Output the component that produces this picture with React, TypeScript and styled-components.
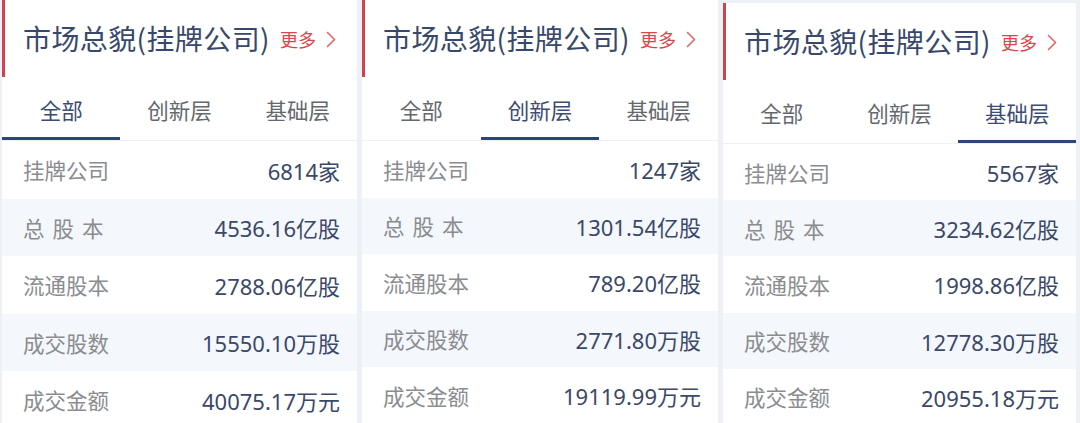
import React from "react";
import styled, { createGlobalStyle } from "styled-components";

const GlobalStyle = createGlobalStyle`
  html, body { margin: 0; padding: 0; }
  body {
    background: #edf1f6;
    font-family: "Noto Sans", "Noto Sans CJK SC", sans-serif;
    width: 1080px;
    height: 423px;
    overflow: hidden;
  }
`;

const Page = styled.div`
  display: flex;
  align-items: flex-start;
  gap: 5px;
  padding-left: 2px;
  height: 423px;
  overflow: hidden;
`;

const Card = styled.section<{ $offset: number; $w: number }>`
  width: ${(p) => p.$w}px;
  margin-top: ${(p) => p.$offset}px;
  background: #ffffff;
  display: flex;
  flex-direction: column;
  flex-shrink: 0;
`;

const Header = styled.div`
  height: 77px;
  flex-shrink: 0;
  display: flex;
  align-items: center;
  border-left: 3px solid #d2424c;
  padding-left: 18px;
  padding-bottom: 1px;
  box-sizing: border-box;
`;

const Title = styled.h2`
  margin: 0;
  font-size: 28px;
  font-weight: 400;
  color: #38486c;
  font-family: "Noto Sans CJK SC", sans-serif;
  letter-spacing: 0.4px;
`;

const More = styled.a`
  margin-left: 10px;
  display: flex;
  align-items: center;
  gap: 10px;
  font-size: 18px;
  color: #d9464c;
  text-decoration: none;
  padding-top: 2px;
  font-family: "Noto Sans CJK SC", sans-serif;
`;

const Tabs = styled.div`
  display: grid;
  grid-template-columns: repeat(3, 1fr);
  height: 64px;
  flex-shrink: 0;
  border-bottom: 1px solid #eef0f4;
  box-sizing: border-box;
`;

const Tab = styled.div<{ $active: boolean }>`
  display: flex;
  align-items: center;
  justify-content: center;
  font-size: 21.5px;
  color: ${(p) => (p.$active ? "#3c4c72" : "#64686e")};
  border-bottom: 3px solid ${(p) => (p.$active ? "#2d4678" : "transparent")};
  padding-top: 4px;
  font-family: "Noto Sans CJK SC", sans-serif;
`;

const Row = styled.div<{ $h: number; $striped: boolean }>`
  height: ${(p) => p.$h}px;
  flex-shrink: 0;
  display: flex;
  align-items: center;
  justify-content: space-between;
  padding: 0 17px 0 21px;
  box-sizing: border-box;
  background: ${(p) => (p.$striped ? "#f4f7fb" : "#ffffff")};
`;

const Label = styled.span<{ $spaced: boolean }>`
  font-size: 21.5px;
  color: #8a8c90;
  letter-spacing: ${(p) => (p.$spaced ? "8px" : "0")};
  font-family: "Noto Sans CJK SC", sans-serif;
`;

const Value = styled.span`
  font-size: 22px;
  color: #3a4869;
`;

const Chevron = () => (
  <svg width="10" height="17" viewBox="0 0 10 17" fill="none">
    <path d="M1.5 1.5 L8.5 8.5 L1.5 15.5" stroke="#e0676b" strokeWidth="1.6" strokeLinecap="round" strokeLinejoin="round" />
  </svg>
);

type CardData = {
  active: number;
  offset: number;
  width: number;
  rowH: number;
  values: string[];
};

const labels = ["挂牌公司", "总股本", "流通股本", "成交股数", "成交金额"];
const tabs = ["全部", "创新层", "基础层"];

const cards: CardData[] = [
  { active: 0, offset: 0, width: 355, rowH: 57.5, values: ["6814家", "4536.16亿股", "2788.06亿股", "15550.10万股", "40075.17万元"] },
  { active: 1, offset: 0, width: 356, rowH: 56.5, values: ["1247家", "1301.54亿股", "789.20亿股", "2771.80万股", "19119.99万元"] },
  { active: 2, offset: 3, width: 353, rowH: 56.2, values: ["5567家", "3234.62亿股", "1998.86亿股", "12778.30万股", "20955.18万元"] },
];

export default function App() {
  return (
    <>
      <GlobalStyle />
      <Page>
        {cards.map((c, ci) => (
          <Card key={ci} $offset={c.offset} $w={c.width}>
            <Header>
              <Title>市场总貌(挂牌公司)</Title>
              <More href="#">
                更多
                <Chevron />
              </More>
            </Header>
            <Tabs>
              {tabs.map((t, i) => (
                <Tab key={t} $active={i === c.active}>
                  {t}
                </Tab>
              ))}
            </Tabs>
            {labels.map((l, i) => (
              <Row key={l} $h={c.rowH} $striped={i % 2 === 1}>
                <Label $spaced={l === "总股本"}>{l}</Label>
                <Value>{c.values[i]}</Value>
              </Row>
            ))}
          </Card>
        ))}
      </Page>
    </>
  );
}
